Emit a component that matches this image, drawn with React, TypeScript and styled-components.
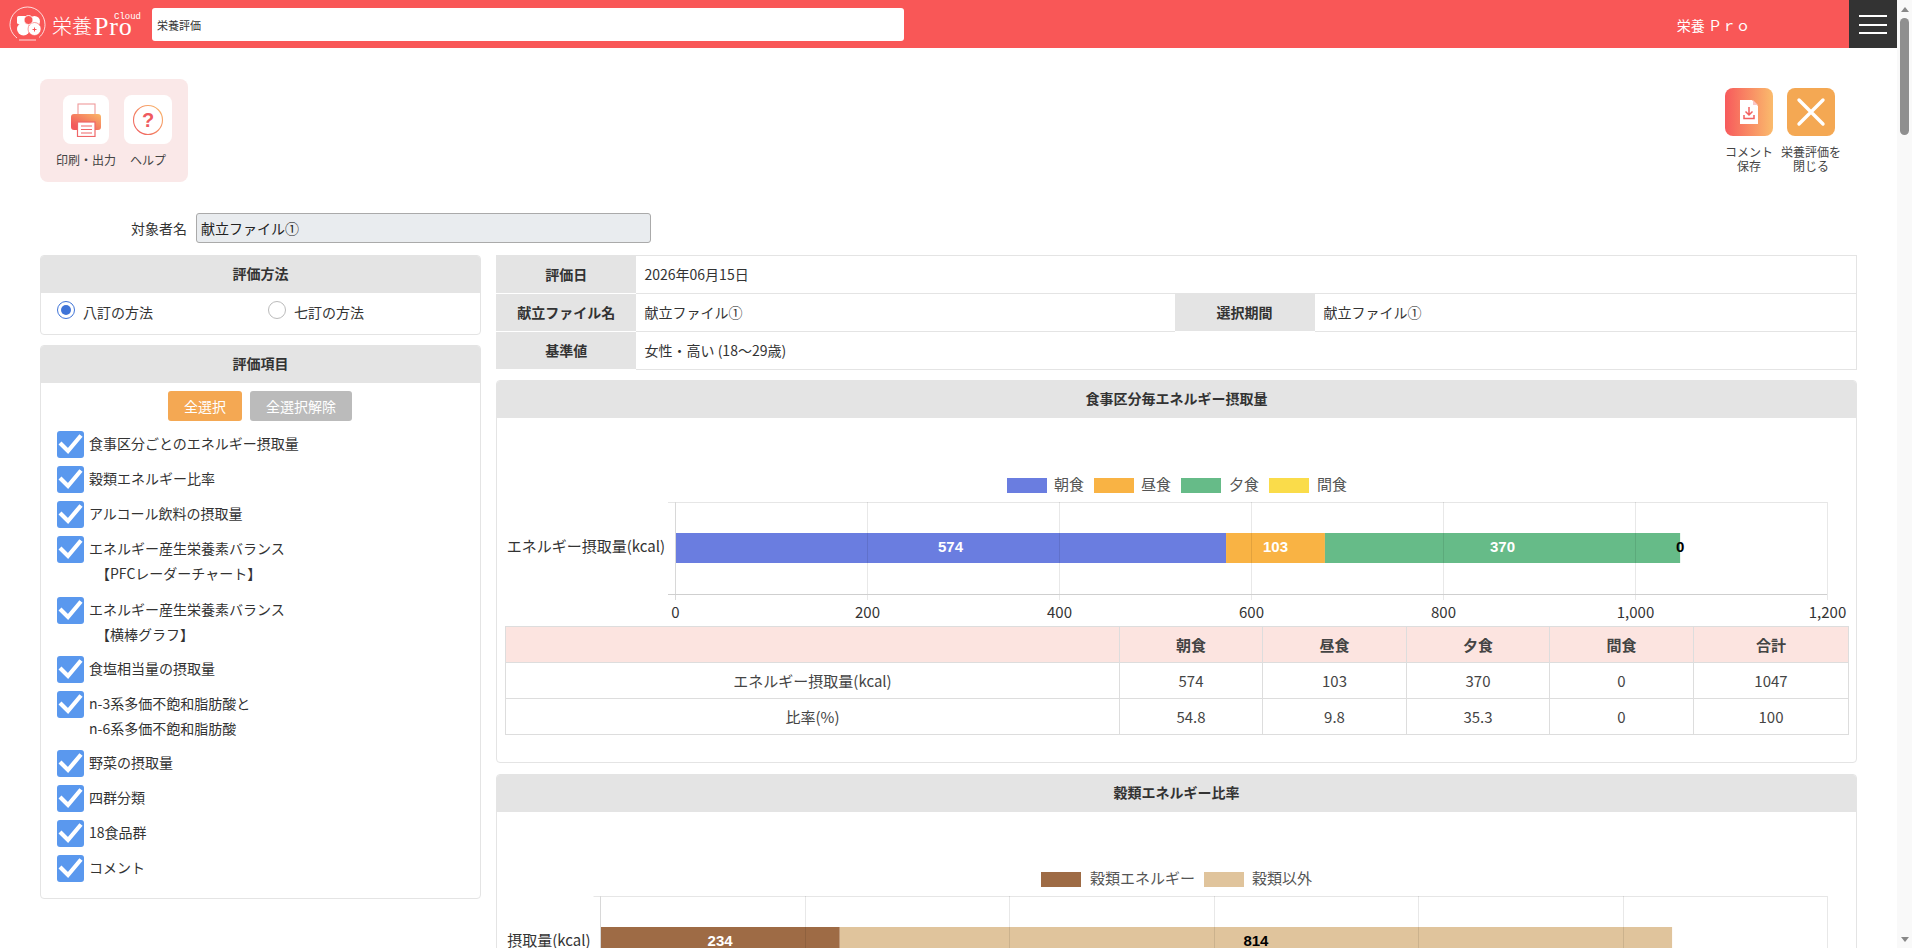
import React from "react";
import styled, { createGlobalStyle } from "styled-components";

const Global = createGlobalStyle`
  html, body { margin: 0; padding: 0; height: 100%; overflow: hidden; background: #fff; }
  body { font-family: "Noto Sans CJK JP", "Noto Sans", sans-serif; font-size: 14px; color: #333; }
  * { box-sizing: border-box; }
`;

const Shell = styled.div`display: flex; height: 948px; overflow: hidden;`;
const Main = styled.div`width: 1897px; height: 948px; overflow: hidden; flex: none;`;

const ScrollTrack = styled.div`
  width: 15px; flex: none; position: relative; background: #f9f9f9;
  display: flex; flex-direction: column; align-items: center;
`;
const ScrollUp = styled.div`
  margin-top: 7px; width: 0; height: 0;
  border-left: 4px solid transparent; border-right: 4px solid transparent; border-bottom: 5px solid #888;
`;
const ScrollThumb = styled.div`margin-top: 6px; width: 9px; height: 117px; border-radius: 5px; background: #8f8f8f;`;
const ScrollDown = styled.div`
  margin-top: auto; margin-bottom: 6px; width: 0; height: 0;
  border-left: 4px solid transparent; border-right: 4px solid transparent; border-top: 5px solid #888;
`;

const Header = styled.header`display: flex; align-items: stretch; height: 48px; background: #f95757;`;
const LogoBox = styled.div`width: 152px; flex: none; display: flex; align-items: center; color: #fff; position: relative;`;
const LogoWord = styled.span`font-size: 20px; font-weight: 300; margin-left: 6px; line-height: 1; margin-top: 4px;`;
const LogoPro = styled.span`font-family: "Liberation Serif", serif; font-size: 26px; margin-left: 2px; line-height: 1; margin-top: 6px; letter-spacing: 0.8px;`;
const LogoCloud = styled.span`position: absolute; left: 114px; top: 13px; font-family: "Liberation Mono", monospace; font-size: 9px; letter-spacing: 0; line-height: 1;`;
const TitleBox = styled.div`
  width: 752px; height: 33px; margin-top: 8px; background: #fff; border-radius: 3px;
  font-size: 11px; line-height: 34px; padding-left: 5px; color: #333;
`;
const BrandText = styled.div`margin-left: auto; margin-right: 99px; color: #fff; font-size: 14px; line-height: 50px;`;
const Burger = styled.div`
  width: 48px; background: #333; display: flex; flex-direction: column; align-items: center; gap: 6.5px; padding-top: 15px;
`;
const BurgerLine = styled.span`display: block; width: 28px; height: 2px; background: #fff;`;

const Page = styled.div`padding: 31px 40px 0;`;
const TopRow = styled.div`display: flex; justify-content: space-between; align-items: flex-start; height: 134px;`;
const ToolPanel = styled.div`
  width: 148px; height: 103px; background: #fae8e8; border-radius: 8px;
  display: flex; padding: 16px 0 0 12px;
`;
const ToolItem = styled.div<{ $w: number }>`
  width: ${p => p.$w}px; display: flex; flex-direction: column; align-items: center;
  font-size: 12px; color: #444; line-height: 16px;
`;
const ToolIcon = styled.div<{ $w: number }>`
  width: ${p => p.$w}px; height: 49px; background: #fff; border-radius: 8px; margin-bottom: 8px;
  display: flex; align-items: center; justify-content: center;
`;
const RightTools = styled.div`display: flex; margin-top: 9px; margin-right: 22px; gap: 14px;`;
const ActionItem = styled.div`
  width: 48px; display: flex; flex-direction: column; align-items: center;
  font-size: 12px; line-height: 14px; color: #444; text-align: center;
`;
const ActionIcon = styled.div<{ $save?: boolean }>`
  width: 48px; height: 48px; border-radius: 8px; margin-bottom: 9px;
  background: ${p => (p.$save ? "linear-gradient(90deg, #f75a5c, #fabb6c)" : "#f4a853")};
  display: flex; align-items: center; justify-content: center;
`;
const ActionLabel = styled.div`white-space: nowrap;`;

const NameRow = styled.div`display: flex; align-items: center; height: 30px; margin-bottom: 12px;`;
const NameLabel = styled.div`width: 147px; text-align: right; margin-right: 9px; font-size: 14px; color: #333;`;
const NameInput = styled.div`
  width: 455px; height: 30px; background: #e9ecef; border: 1px solid #aaa; border-radius: 3px;
  padding-left: 4px; line-height: 29px; font-size: 14px; color: #222;
`;

const Columns = styled.div`display: grid; grid-template-columns: 441px 1361px; column-gap: 15px; align-items: start;`;
const Col = styled.div<{ $gap: number }>`display: flex; flex-direction: column; gap: ${p => p.$gap}px;`;
const Panel = styled.section`border: 1px solid #e4e4e4; border-radius: 4px; overflow: hidden; background: #fff;`;
const PanelHead = styled.div`
  height: 37px; background: #e4e4e4; text-align: center;
  font-weight: 700; font-size: 14px; line-height: 35px; color: #333;
`;
const RadioRow = styled.div`display: grid; grid-template-columns: 211px 1fr; padding: 9px 0 0 16px; height: 41px;`;
const RadioLabel = styled.label`display: flex; align-items: flex-start; font-size: 14px; color: #333; line-height: 20px;`;
const RadioDot = styled.span<{ $on?: boolean }>`
  width: 18px; height: 18px; border-radius: 50%; flex: none; margin-right: 8px; margin-top: -1px;
  border: 1px solid ${p => (p.$on ? "#3f74d8" : "#bbb")};
  display: flex; align-items: center; justify-content: center;
  &::after { content: ""; width: 10px; height: 10px; border-radius: 50%; background: ${p => (p.$on ? "#3f74d8" : "transparent")}; }
`;
const SelectRow = styled.div`display: flex; justify-content: center; gap: 8px; margin: 8px 0 10px; padding-right: 1px;`;
const SelectBtn = styled.div<{ $w: number; $bg: string }>`
  width: ${p => p.$w}px; height: 30px; border-radius: 3px; background: ${p => p.$bg};
  color: #fff; text-align: center; line-height: 30px; font-size: 14px;
`;
const CheckList = styled.div`padding: 0 0 15px 16px;`;
const CheckRow = styled.div<{ $h: number }>`display: flex; height: ${p => p.$h}px;`;
const CheckBox = styled.span`
  width: 27px; height: 27px; flex: none; border-radius: 3px; background: #5a98ee; margin-right: 5px;
  display: flex; align-items: center; justify-content: center;
`;
const CheckText = styled.div`font-size: 14px; line-height: 25px; color: #333;`;
const CheckLine = styled.div``;

const InfoTable = styled.table`
  width: 100%; height: 114px; border-collapse: collapse; table-layout: fixed; margin-bottom: -1px;
  border: 1px solid #e4e4e4;
`;
const InfoHead = styled.th`background: #e4e4e4; font-weight: 700; font-size: 14px; color: #333; height: 38px; border: 0; border-bottom: 1px solid #fff; padding: 0 0 2px;`;
const InfoCell = styled.td`padding: 0 0 2px 9px; font-size: 14px; color: #333; border-bottom: 1px solid #e4e4e4;`;

const ChartSvg = styled.svg`display: block; width: 100%; height: 208px; font-family: "Noto Sans CJK JP", "Noto Sans", sans-serif;`;

const DataTable = styled.table`
  width: 1343px; margin: 0 0 27px 8px; border-collapse: collapse; table-layout: fixed; font-size: 15px; color: #444;
`;
const DataHead = styled.th`
  height: 36px; background: #fce4e0; border: 1px solid #ddd; font-weight: 700; color: #444; font-size: 15px; padding: 0;
`;
const DataCell = styled.td`height: 36px; border: 1px solid #ddd; text-align: center; padding: 0;`;

type Seg = { value: number; color: string; ink: string };
type ChartProps = {
  top: number; left: number; unit: number; label: string;
  segs: Seg[]; legend: { name: string; color: string; x: number; tx: number }[];
};

const Chart = ({ top, left, unit, label, segs, legend }: ChartProps) => {
  const legendY = top + 60;
  const gridTop = top + 84;
  const gridBottom = top + 176;
  const barTop = top + 115;
  const ticks = [0, 200, 400, 600, 800, 1000, 1200];
  let x = left;
  return (
    <ChartSvg viewBox={`497 ${top} 1359 208`}>
      {legend.map(l => (
        <g key={l.name}>
          <rect x={l.x} y={legendY} width={40} height={15} fill={l.color} />
          <text x={l.tx} y={legendY + 12} fontSize={15} fill="#555">{l.name}</text>
        </g>
      ))}
      <line x1={left - 7} x2={1827} y1={gridTop + 0.5} y2={gridTop + 0.5} stroke="#e6e6e6" />
      {segs.map(s => {
        const w = s.value * unit;
        const el = <rect key={s.color} x={x} y={barTop} width={w} height={30} fill={s.color} />;
        x += w;
        return el;
      })}
      {ticks.map(t => {
        const tx = Math.floor(left + t * unit) + 0.5;
        return (
          <g key={t}>
            <line x1={tx} x2={tx} y1={gridTop} y2={gridBottom + 6} stroke={t === 0 ? "#d8d8d8" : "rgba(0,0,0,0.09)"} />
            <text x={tx} y={gridBottom + 24} fontSize={15} fill="#333" textAnchor="middle">{t.toLocaleString("en-US")}</text>
          </g>
        );
      })}
      <line x1={left - 7} x2={1827} y1={gridBottom + 0.5} y2={gridBottom + 0.5} stroke="#cfcfcf" />
      <text x={left - 10} y={barTop + 19} fontSize={15} fill="#333" textAnchor="end">{label}</text>
      {segs.reduce<{ x: number; out: React.ReactNode[] }>((acc, s) => {
        const w = s.value * unit;
        acc.out.push(
          <text key={s.color} x={acc.x + w / 2} y={barTop + 19} fontSize={15} fontWeight={700}
            fontFamily='"Liberation Sans", sans-serif' fill={s.ink} textAnchor="middle">{s.value}</text>
        );
        acc.x += w;
        return acc;
      }, { x: left, out: [] }).out}
    </ChartSvg>
  );
};

const Check = () => (
  <svg width="27" height="27" viewBox="0 0 27 27" fill="none">
    <path d="M3 12 L11 20 L24 4.500" stroke="#fff" strokeWidth="4.200" />
  </svg>
);

const PrinterIcon = () => (
  <svg width="32" height="34" viewBox="0 0 32 34">
    <defs>
      <linearGradient id="pg" x1="0" y1="1" x2="1" y2="0">
        <stop offset="0.2" stopColor="#f25a5c" />
        <stop offset="1" stopColor="#fab868" />
      </linearGradient>
    </defs>
    <rect x="8" y="1" width="17" height="12" fill="#fff" stroke="#ef9a9b" strokeWidth="1.100" />
    <rect x="1" y="11" width="30" height="16" rx="3" fill="url(#pg)" />
    <rect x="7.500" y="19" width="17.500" height="14.500" fill="#fff" stroke="#ef6668" strokeWidth="1.200" />
    <path d="M11 23h11M11 26.500h11M11 30h11" stroke="#ef6668" strokeWidth="1.200" />
  </svg>
);

const HelpIcon = () => (
  <svg width="32" height="32" viewBox="0 0 32 32">
    <defs>
      <linearGradient id="hg" x1="0" y1="1" x2="1" y2="0">
        <stop offset="0" stopColor="#ef5a5f" />
        <stop offset="1" stopColor="#f9bc6c" />
      </linearGradient>
    </defs>
    <circle cx="16" cy="16" r="14.500" fill="#fff" stroke="url(#hg)" strokeWidth="1.100" />
    <text x="16" y="23" fontSize="20" fontWeight="700" fill="#ef5a5f" textAnchor="middle" fontFamily='"Liberation Sans", sans-serif'>?</text>
  </svg>
);

const SaveIcon = () => (
  <svg width="20" height="26" viewBox="0 0 20 26">
    <path d="M1 1h12l6 6v18H1z" fill="#fff" />
    <path d="M14 1l5 5h-5z" fill="#f9c6c6" />
    <path d="M10 8v8M6.500 12.500L10 16l3.500-3.500M5 16v3.500h10V16" fill="none" stroke="#f2605f" strokeWidth="1.500" />
  </svg>
);

const CloseIcon = () => (
  <svg width="30" height="30" viewBox="0 0 30 30">
    <path d="M3 3L27 27M27 3L3 27" stroke="#fff" strokeWidth="3.400" strokeLinecap="round" />
  </svg>
);

const LogoMark = () => (
  <svg width="37" height="37" viewBox="0 0 37 37" style={{ marginLeft: 9, flex: "none" }}>
    <path d="M8 32C3 28 1 23 1 18.500 1 9 9 1 18.500 1S36 9 36 18.500c0 5-2 9.500-6 13" fill="none" stroke="#fff" strokeWidth="0.800" />
    <path d="M10 34h17" stroke="#fff" strokeWidth="0.800" />
    <rect x="8" y="10" width="11" height="8" rx="1.500" fill="#fff" />
    <circle cx="25.500" cy="15.500" r="5.500" fill="#fff" />
    <circle cx="14.500" cy="23" r="6.500" fill="#fff" />
    <circle cx="25.500" cy="23" r="6.500" fill="#fff" stroke="#f95757" strokeWidth="0.600" />
    <circle cx="19.500" cy="14" r="4.500" fill="#f95757" stroke="#fff" strokeWidth="0.900" />
    <path d="M23.500 23.500h4M25.500 21.500v4" stroke="#f95757" strokeWidth="1" />
  </svg>
);

const checks: { lines: string[]; h: number }[] = [
  { lines: ["食事区分ごとのエネルギー摂取量"], h: 35 },
  { lines: ["穀類エネルギー比率"], h: 35 },
  { lines: ["アルコール飲料の摂取量"], h: 35 },
  { lines: ["エネルギー産生栄養素バランス", "　【PFCレーダーチャート】"], h: 61 },
  { lines: ["エネルギー産生栄養素バランス", "　【横棒グラフ】"], h: 59 },
  { lines: ["食塩相当量の摂取量"], h: 35 },
  { lines: ["n-3系多価不飽和脂肪酸と", "n-6系多価不飽和脂肪酸"], h: 59 },
  { lines: ["野菜の摂取量"], h: 35 },
  { lines: ["四群分類"], h: 35 },
  { lines: ["18食品群"], h: 35 },
  { lines: ["コメント"], h: 28 },
];

const columns = ["朝食", "昼食", "夕食", "間食", "合計"];
const colWidths = [614, 143, 144, 143, 144, 155];

export default function App() {
  return (
    <Shell>
      <Global />
      <Main>
        <Header>
          <LogoBox>
            <LogoMark />
            <LogoWord>栄養</LogoWord>
            <LogoPro>Pro</LogoPro>
            <LogoCloud>Cloud</LogoCloud>
          </LogoBox>
          <TitleBox>栄養評価</TitleBox>
          <BrandText>栄養 Ｐｒｏ</BrandText>
          <Burger>
            <BurgerLine /><BurgerLine /><BurgerLine />
          </Burger>
        </Header>
        <Page>
          <TopRow>
            <ToolPanel>
              <ToolItem $w={68}>
                <ToolIcon $w={46}><PrinterIcon /></ToolIcon>
                印刷・出力
              </ToolItem>
              <ToolItem $w={56}>
                <ToolIcon $w={48}><HelpIcon /></ToolIcon>
                ヘルプ
              </ToolItem>
            </ToolPanel>
            <RightTools>
              <ActionItem>
                <ActionIcon $save><SaveIcon /></ActionIcon>
                <ActionLabel>コメント</ActionLabel>
                <ActionLabel>保存</ActionLabel>
              </ActionItem>
              <ActionItem>
                <ActionIcon><CloseIcon /></ActionIcon>
                <ActionLabel>栄養評価を</ActionLabel>
                <ActionLabel>閉じる</ActionLabel>
              </ActionItem>
            </RightTools>
          </TopRow>
          <NameRow>
            <NameLabel>対象者名</NameLabel>
            <NameInput>献立ファイル①</NameInput>
          </NameRow>
          <Columns>
            <Col $gap={10}>
              <Panel>
                <PanelHead>評価方法</PanelHead>
                <RadioRow>
                  <RadioLabel><RadioDot $on />八訂の方法</RadioLabel>
                  <RadioLabel><RadioDot />七訂の方法</RadioLabel>
                </RadioRow>
              </Panel>
              <Panel>
                <PanelHead>評価項目</PanelHead>
                <SelectRow>
                  <SelectBtn $w={74} $bg="#f4a853">全選択</SelectBtn>
                  <SelectBtn $w={102} $bg="#bbbbbb">全選択解除</SelectBtn>
                </SelectRow>
                <CheckList>
                  {checks.map(c => (
                    <CheckRow key={c.lines.join()} $h={c.h}>
                      <CheckBox><Check /></CheckBox>
                      <CheckText>
                        {c.lines.map(l => <CheckLine key={l}>{l}</CheckLine>)}
                      </CheckText>
                    </CheckRow>
                  ))}
                </CheckList>
              </Panel>
            </Col>
            <Col $gap={11}>
              <InfoTable>
                <colgroup>
                  <col style={{ width: 139 }} /><col style={{ width: 539 }} /><col style={{ width: 140 }} /><col />
                </colgroup>
                <tbody>
                  <tr><InfoHead>評価日</InfoHead><InfoCell colSpan={3}>2026年06月15日</InfoCell></tr>
                  <tr>
                    <InfoHead>献立ファイル名</InfoHead><InfoCell>献立ファイル①</InfoCell>
                    <InfoHead>選択期間</InfoHead><InfoCell>献立ファイル①</InfoCell>
                  </tr>
                  <tr><InfoHead>基準値</InfoHead><InfoCell colSpan={3}>女性・高い (18～29歳)</InfoCell></tr>
                </tbody>
              </InfoTable>
              <Panel>
                <PanelHead>食事区分毎エネルギー摂取量</PanelHead>
                <Chart
                  top={418} left={675} unit={0.96} label="エネルギー摂取量(kcal)"
                  legend={[
                    { name: "朝食", color: "#6a7de0", x: 1007, tx: 1054 },
                    { name: "昼食", color: "#f9b344", x: 1094, tx: 1141 },
                    { name: "夕食", color: "#66bb88", x: 1181, tx: 1229 },
                    { name: "間食", color: "#fadc4a", x: 1269, tx: 1317 },
                  ]}
                  segs={[
                    { value: 574, color: "#6a7de0", ink: "#fff" },
                    { value: 103, color: "#f9b344", ink: "#fff" },
                    { value: 370, color: "#66bb88", ink: "#fff" },
                    { value: 0, color: "#fadc4a", ink: "#000" },
                  ]}
                />
                <DataTable>
                  <colgroup>{colWidths.map((w, i) => <col key={i} style={{ width: w }} />)}</colgroup>
                  <thead>
                    <tr><DataHead />{columns.map(c => <DataHead key={c}>{c}</DataHead>)}</tr>
                  </thead>
                  <tbody>
                    <tr>
                      <DataCell>エネルギー摂取量(kcal)</DataCell>
                      {[574, 103, 370, 0, 1047].map((v, i) => <DataCell key={i}>{v}</DataCell>)}
                    </tr>
                    <tr>
                      <DataCell>比率(%)</DataCell>
                      {["54.8", "9.8", "35.3", "0", "100"].map((v, i) => <DataCell key={i}>{v}</DataCell>)}
                    </tr>
                  </tbody>
                </DataTable>
              </Panel>
              <Panel>
                <PanelHead>穀類エネルギー比率</PanelHead>
                <Chart
                  top={812} left={600.5} unit={1.0225} label="摂取量(kcal)"
                  legend={[
                    { name: "穀類エネルギー", color: "#9e6b45", x: 1041, tx: 1090 },
                    { name: "穀類以外", color: "#e0c49c", x: 1204, tx: 1252 },
                  ]}
                  segs={[
                    { value: 234, color: "#9e6b45", ink: "#fff" },
                    { value: 814, color: "#e0c49c", ink: "#000" },
                  ]}
                />
              </Panel>
            </Col>
          </Columns>
        </Page>
      </Main>
      <ScrollTrack>
        <ScrollUp />
        <ScrollThumb />
        <ScrollDown />
      </ScrollTrack>
    </Shell>
  );
}
